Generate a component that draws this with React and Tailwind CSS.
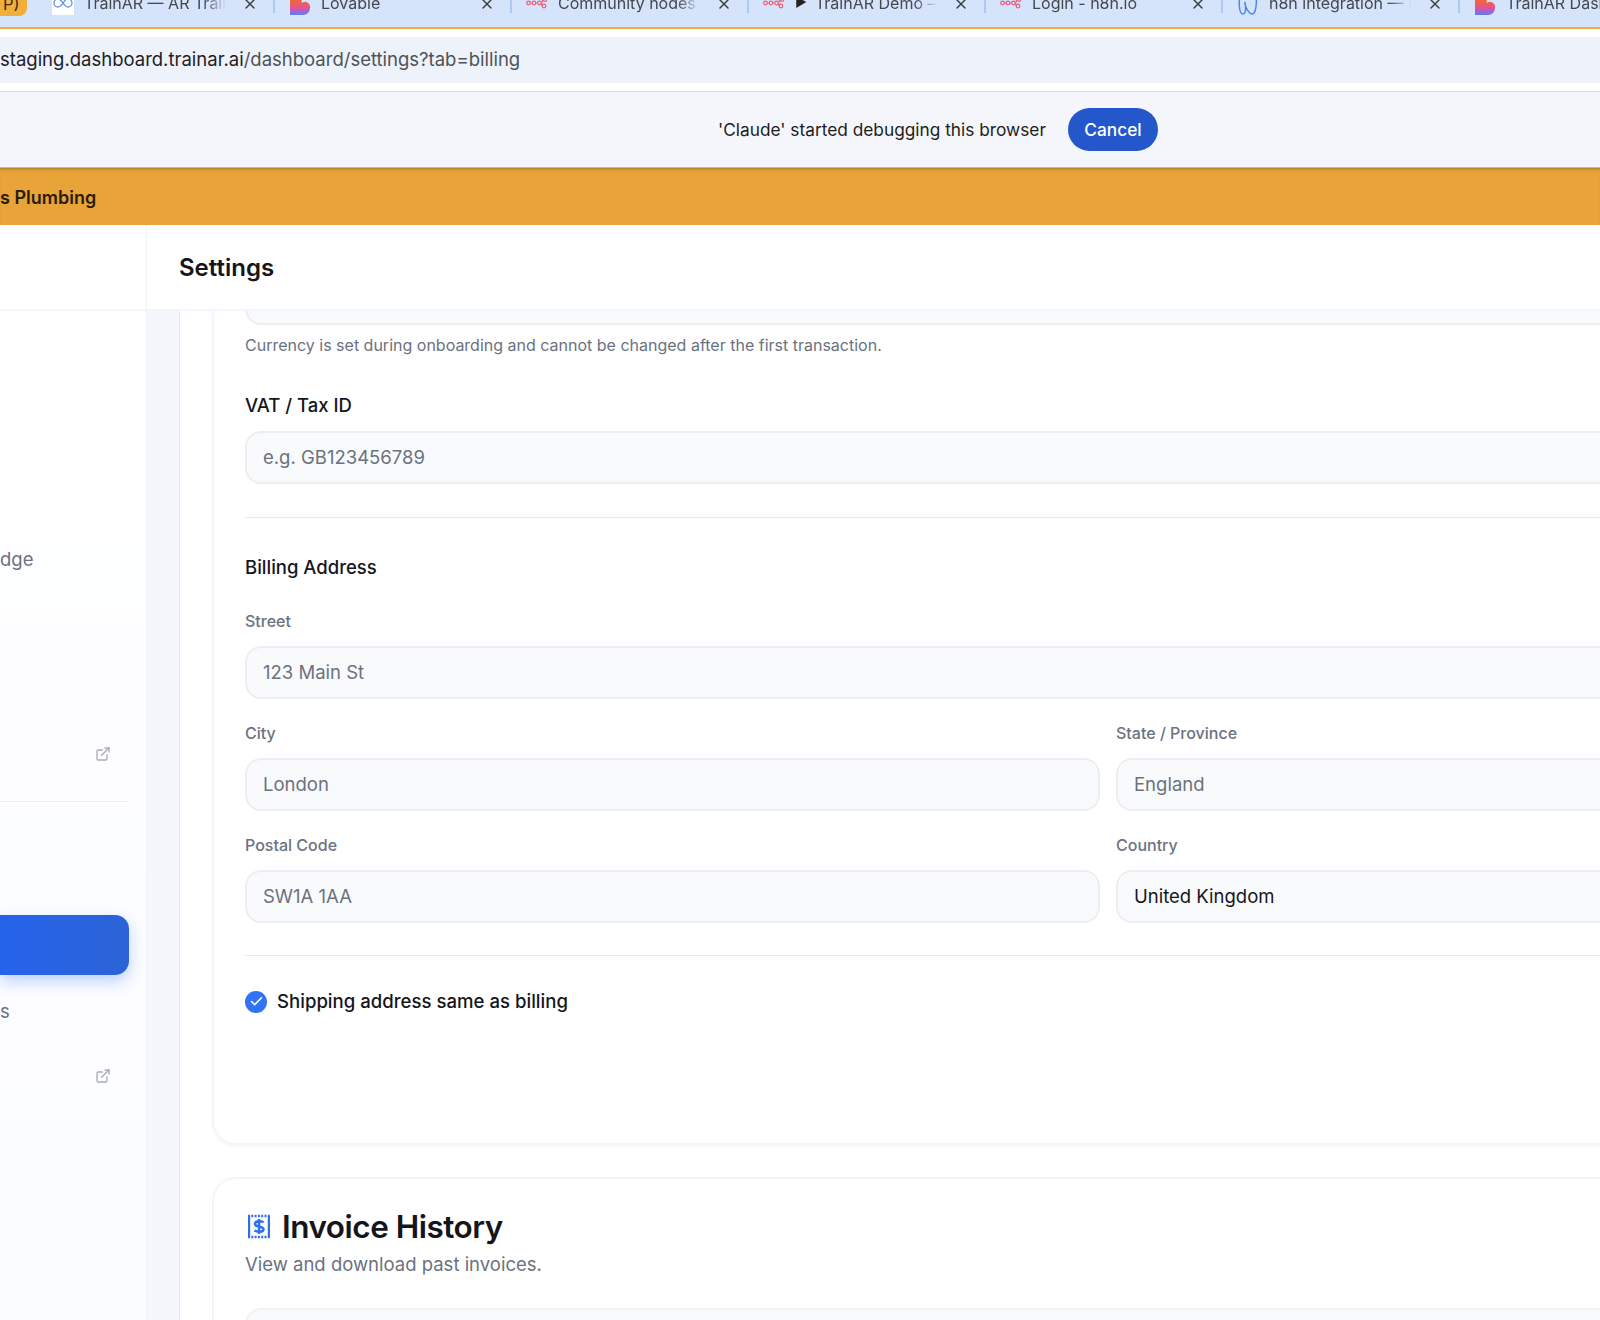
import React from 'react';
import { X, ExternalLink, Check } from 'lucide-react';

const InfinityIcon = () => (
  <div className="w-[22px] h-[22px] bg-white flex items-end justify-center shrink-0">
    <svg width="22" height="22" viewBox="0 0 22 22" fill="none" stroke="#5b93f0" strokeWidth="1.3">
      <path d="M11 10c-2-3-3.500-4-5-4a4 4 0 0 0 0 8c1.500 0 3-1 5-4s3.500-4 5-4a4 4 0 0 1 0 8c-1.500 0-3-1-5-4z" />
    </svg>
  </div>
);

const LovableIcon = () => (
  <svg width="22" height="22" viewBox="0 0 22 22" className="shrink-0">
    <defs>
      <linearGradient id="lov" x1="0" y1="0" x2="0" y2="1">
        <stop offset="0.35" stopColor="#f2653a" />
        <stop offset="0.68" stopColor="#e0529c" />
        <stop offset="1" stopColor="#5b7cf5" />
      </linearGradient>
    </defs>
    <path d="M1 4a6 6 0 0 1 11 0l1 6a5 5 0 0 1 8 5 7 7 0 0 1-7 7H1z" fill="url(#lov)" />
  </svg>
);

const N8nIcon = () => (
  <svg width="22" height="22" viewBox="0 0 22 22" fill="none" stroke="#e8607c" strokeWidth="1.2" className="shrink-0">
    <g transform="translate(0 3)">
      <circle cx="2.500" cy="7" r="1.800" />
      <circle cx="8" cy="7" r="1.800" />
      <circle cx="13.500" cy="7" r="1.800" />
      <circle cx="19" cy="3.500" r="1.800" />
      <circle cx="18" cy="10" r="1.800" />
      <path d="M4.300 7h1.900M9.800 7h1.900M15.300 7c1.200 0 .8-3.500 1.900-3.500M15.300 7c.8 0 .4 3 1 3" />
    </g>
  </svg>
);

const ToothIcon = () => (
  <svg width="22" height="22" viewBox="0 0 22 22" fill="none" stroke="#4285f4" strokeWidth="1.4" className="shrink-0">
    <path d="M4 0C1 8 2 21 6 21c3 0 3-6 2-12-1 5 5 12 7 12 4 0 5-10 4-21" />
  </svg>
);

const tabs = [
  { icon: <InfinityIcon />, title: 'TrainAR — AR Training', start: true },
  { icon: <LovableIcon />, title: 'Lovable' },
  { icon: <N8nIcon />, title: 'Community nodes' },
  { icon: <N8nIcon />, title: 'TrainAR Demo — n8n', play: true },
  { icon: <N8nIcon />, title: 'Login - n8n.io' },
  { icon: <ToothIcon />, title: 'n8n integration — Docs' },
  { icon: <LovableIcon />, title: 'TrainAR Dashboard', noClose: true },
];

const Tab = ({ tab }) => (
  <div className="w-[237px] shrink-0 h-[26px] -mt-[9px] flex items-center relative">
    {!tab.start && <div className="absolute -left-[1px] top-[4px] w-[2px] h-[18px] bg-[#b0c9f3]" />}
    <div className="w-[47px] pl-[15px] shrink-0 flex">{tab.icon}</div>
    <div className="w-[142px] shrink-0 -mt-[2px] flex items-center gap-[8px] overflow-hidden whitespace-nowrap text-[16px] text-[#45484d] [mask-image:linear-gradient(to_right,black_84%,transparent_100%)]">
      {tab.play && <span className="text-[13px] text-[#222]">▶</span>}
      {tab.title}
    </div>
    {!tab.noClose && <X size={16} strokeWidth={2.2} className="ml-[16px] text-[#3c4043] shrink-0" />}
  </div>
);

const Label = ({ children }) => (
  <label className="block h-[20px] leading-[20px] mb-[15px] text-[16px] font-medium text-[#6b7280]">{children}</label>
);

const Input = ({ value, filled }) => (
  <div
    className={`h-[53px] px-[16px] flex items-center bg-[#f9fafc] border-2 border-[#eceef2] rounded-[16px] text-[18.500px] ${
      filled ? 'text-[#14161c]' : 'text-[#6b7280]'
    }`}
  >
    {value}
  </div>
);

const Field = ({ label, value, filled }) => (
  <div>
    <Label>{label}</Label>
    <Input value={value} filled={filled} />
  </div>
);

const NavRow = ({ text, external }) => (
  <div className="h-[60px] flex items-center justify-between pr-[18px] text-[18.500px] text-[#6b7280]">
    <span className="mt-[4px]">{text}</span>
    {external && <ExternalLink size={16} className="text-[#a8acb4]" />}
  </div>
);

const ReceiptIcon = () => (
  <svg width="22" height="25" viewBox="0 0 22 25" fill="none" stroke="#2f6fed" strokeWidth="2.200" className="shrink-0">
    <path d="M1.100 2v21M20.900 2v21" />
    <path strokeDasharray="2 1.300" strokeWidth="2.600" d="M0 2h22M0 23h22" />
    <path d="M15.500 8.500c-1.500-1.800-8.500-2-8.500 1.500 0 4 8.500 1.500 8.500 5.300 0 3.200-7 3-8.800.9M11 5v15" strokeWidth="2.500" />
  </svg>
);

export default function App() {
  return (
    <div className="w-[1600px] h-screen overflow-hidden bg-white font-[Inter,sans-serif]">
      {/* browser chrome */}
      <div className="h-[29px] bg-[#d5e3fb] border-b-2 border-[#f0ab38] flex overflow-hidden">
        <div className="w-[27px] h-[16px] shrink-0 mr-[10px] pl-[3px] bg-[#f1ae3b] rounded-br-[8px] text-[16.500px] leading-[8px] text-[#3d2c10]">P)</div>
        {tabs.map((t, i) => (
          <Tab key={i} tab={t} />
        ))}
      </div>
      <div className="h-[63px] pt-[8px] border-b border-[#dcdee2]">
        <div className="h-[46px] bg-[#edf2fb] flex items-center text-[18.500px] text-[#1f2023] whitespace-nowrap">
          staging.dashboard.trainar.ai<span className="text-[#4f5358]">/dashboard/settings?tab=billing</span>
        </div>
      </div>
      <div className="h-[76px] bg-[#f4f6fb] border-b border-[#b8bbc0] flex items-center justify-center gap-[22px] pl-[276px]">
        <span className="text-[17.300px] pt-[1px] text-[#1c1d20]">'Claude' started debugging this browser</span>
        <button className="w-[90px] h-[43px] rounded-full bg-[#2557cc] text-white text-[17.300px] pt-[1px] font-medium">Cancel</button>
      </div>
      <div className="h-[57px] pt-[2px] bg-[#e8a339] flex items-center text-[18px] font-semibold text-[#2a1c08] shadow-[inset_0_3px_3px_-2px_rgba(90,60,10,0.45)]">
        s Plumbing
      </div>

      {/* app */}
      <div className="flex h-[1095px]">
        <aside className="w-[147px] shrink-0 border-r border-[#eef2fb] bg-gradient-to-b from-white to-[#fbfcff] flex flex-col">
          <div className="h-[86px] shrink-0 border-b-2 border-[#f3f6fc] bg-white" />
          <div className="w-[129px] pt-[20px] flex flex-col">
            <div className="flex flex-col gap-[5.500px]">
              <NavRow />
              <NavRow />
              <NavRow />
              <NavRow text="dge" />
              <NavRow />
              <NavRow />
              <NavRow external />
            </div>
            <div className="h-[1px] bg-[#eff0f3] mt-[17px] mb-[47px]" />
            <div className="flex flex-col gap-[5.500px]">
              <NavRow />
              <div className="h-[60px] rounded-r-[14px] bg-gradient-to-r from-[#2563eb] to-[#2c64d6] shadow-[0_6px_16px_rgba(37,99,235,0.3)]" />
              <NavRow text="s" />
              <NavRow external />
            </div>
          </div>
        </aside>
        <div className="flex-1 min-w-0 flex flex-col">
          <header className="h-[86px] pt-[1px] shrink-0 border-b-2 border-[#f3f6fc] flex items-center pl-[32px] text-[24px] font-semibold text-[#14161c]">
            Settings
          </header>
          <div className="flex flex-1 min-h-0">
            <div className="w-[33px] shrink-0 bg-[#f5f7fd] border-r border-[#e6e9f1]" />
            <main className="flex-1 overflow-hidden pl-[32px]">
              <section className="w-[1792px] -mt-[51px] px-[31px] pt-[10px] pb-[127px] border-2 border-[#f2f5fb] rounded-[24px] shadow-[0_2px_3px_rgba(30,50,100,0.04)]">
                <Input value="" />
                <p className="mt-[8px] h-[24px] leading-[24px] text-[16px] text-[#6b7280]">
                  Currency is set during onboarding and cannot be changed after the first transaction.
                </p>
                <h4 className="mt-[34px] mb-[12px] h-[28px] leading-[28px] text-[18.500px] font-medium text-[#14161c]">VAT / Tax ID</h4>
                <Input value="e.g. GB123456789" />
                <div className="h-[1px] bg-[#e8eaef] mt-[33px]" />
                <h4 className="mt-[35px] mb-[30px] h-[28px] leading-[28px] text-[18.500px] font-medium text-[#14161c]">Billing Address</h4>
                <div className="grid grid-cols-2 gap-x-[16px] gap-y-[24px]">
                  <div className="col-span-2">
                    <Field label="Street" value="123 Main St" />
                  </div>
                  <Field label="City" value="London" />
                  <Field label="State / Province" value="England" />
                  <Field label="Postal Code" value="SW1A 1AA" />
                  <Field label="Country" value="United Kingdom" filled />
                </div>
                <div className="h-[1px] bg-[#e8eaef] mt-[32px]" />
                <div className="mt-[32px] flex items-center gap-[10px]">
                  <span className="w-[22px] h-[22px] rounded-full bg-[#3273f6] flex items-center justify-center">
                    <Check size={15} strokeWidth={2.5} className="text-white" />
                  </span>
                  <span className="text-[18.600px] font-medium text-[#14161c]">Shipping address same as billing</span>
                </div>
              </section>
              <section className="w-[1792px] mt-[32px] px-[31px] pt-[30px] border-2 border-[#f2f5fb] rounded-[24px]">
                <div className="flex items-center gap-[12px] pl-[3px]">
                  <ReceiptIcon />
                  <h2 className="text-[31.500px] leading-[36px] font-semibold text-[#14161c] tracking-[-0.5px]">Invoice History</h2>
                </div>
                <p className="mt-[5px] text-[18.500px] leading-[28px] text-[#6b7280]">View and download past invoices.</p>
                <div className="mt-[30px] h-[80px] bg-[#f9fafc] border-2 border-[#f1f3f7] rounded-[16px]" />
              </section>
            </main>
          </div>
        </div>
      </div>
    </div>
  );
}
